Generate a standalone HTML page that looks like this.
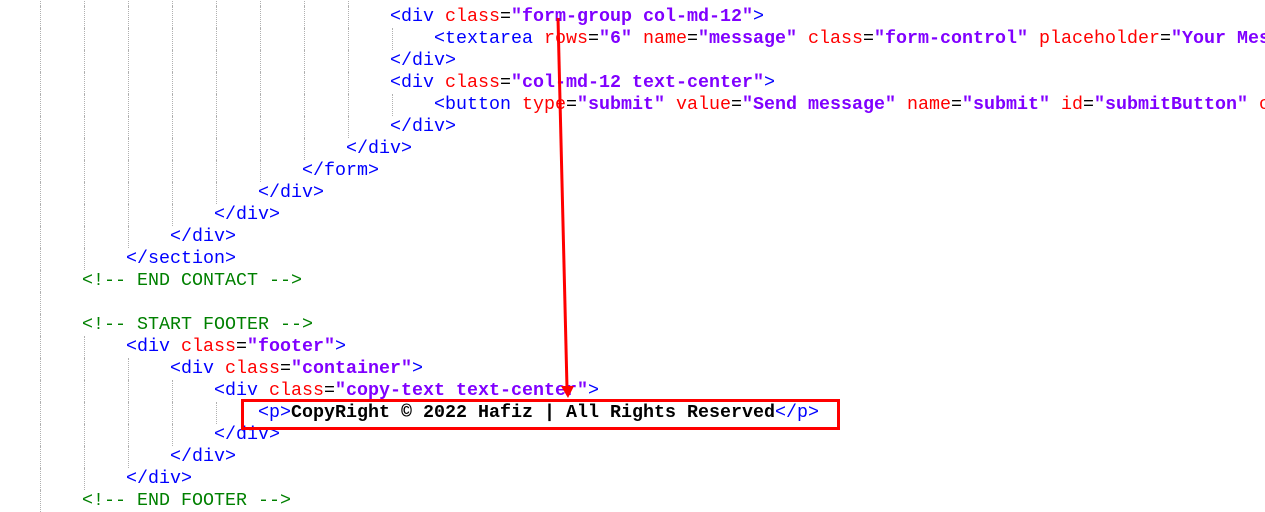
<!DOCTYPE html>
<html><head><meta charset="utf-8"><style>
body{margin:0;width:1265px;height:503px;overflow:hidden;background:#fff;position:relative;font-family:"Liberation Mono","Courier New",monospace;font-size:18.333px}
.l{position:absolute;height:22px;line-height:22px;white-space:pre}
.t{color:#0000ff}.a{color:#ff0000}.v{color:#8000ff;font-weight:bold}.c{color:#008000}.b{color:#000;font-weight:bold}
.g{position:absolute;width:0;border-left:1px dotted #b0b0b0}
</style></head><body>
<div id="guides"></div>
<div id="code"></div>
<div style="position:absolute;left:241px;top:399px;width:593px;height:25px;border:3px solid #f00"></div>
<svg style="position:absolute;left:0;top:0" width="1265" height="503">
<line x1="558" y1="18" x2="567" y2="388" stroke="#f00" stroke-width="3"/>
<polygon points="561,386 574,386 568,398" fill="#f00"/>
</svg>
<script>
(function(){
var L=[
[8,'<span class="t">&lt;/div&gt;</span>'],
[8,'<span class="t">&lt;div </span><span class="a">class</span>=<span class="v">"form-group col-md-12"</span><span class="t">&gt;</span>'],
[9,'<span class="t">&lt;textarea </span><span class="a">rows</span>=<span class="v">"6"</span> <span class="a">name</span>=<span class="v">"message"</span> <span class="a">class</span>=<span class="v">"form-control"</span> <span class="a">placeholder</span>=<span class="v">"Your Message"</span>'],
[8,'<span class="t">&lt;/div&gt;</span>'],
[8,'<span class="t">&lt;div </span><span class="a">class</span>=<span class="v">"col-md-12 text-center"</span><span class="t">&gt;</span>'],
[9,'<span class="t">&lt;button </span><span class="a">type</span>=<span class="v">"submit"</span> <span class="a">value</span>=<span class="v">"Send message"</span> <span class="a">name</span>=<span class="v">"submit"</span> <span class="a">id</span>=<span class="v">"submitButton"</span> <span class="a">class</span>'],
[8,'<span class="t">&lt;/div&gt;</span>'],
[7,'<span class="t">&lt;/div&gt;</span>'],
[6,'<span class="t">&lt;/form&gt;</span>'],
[5,'<span class="t">&lt;/div&gt;</span>'],
[4,'<span class="t">&lt;/div&gt;</span>'],
[3,'<span class="t">&lt;/div&gt;</span>'],
[2,'<span class="t">&lt;/section&gt;</span>'],
[1,'<span class="c">&lt;!-- END CONTACT --&gt;</span>'],
[1,''],
[1,'<span class="c">&lt;!-- START FOOTER --&gt;</span>'],
[2,'<span class="t">&lt;div </span><span class="a">class</span>=<span class="v">"footer"</span><span class="t">&gt;</span>'],
[3,'<span class="t">&lt;div </span><span class="a">class</span>=<span class="v">"container"</span><span class="t">&gt;</span>'],
[4,'<span class="t">&lt;div </span><span class="a">class</span>=<span class="v">"copy-text text-center"</span><span class="t">&gt;</span>'],
[5,'<span class="t">&lt;p&gt;</span><span class="b">CopyRight © 2022 Hafiz | All Rights Reserved</span><span class="t">&lt;/p&gt;</span>'],
[4,'<span class="t">&lt;/div&gt;</span>'],
[3,'<span class="t">&lt;/div&gt;</span>'],
[2,'<span class="t">&lt;/div&gt;</span>'],
[1,'<span class="c">&lt;!-- END FOOTER --&gt;</span>']
];
var h='',g='';
for(var i=0;i<L.length;i++){var n=L[i][0],y=-16+22*i;
h+='<div class="l" style="top:'+y+'px;left:'+(38+44*n)+'px">'+L[i][1]+'</div>';
for(var k=0;k<n;k++)g+='<div class="g" style="left:'+(40+44*k)+'px;top:'+y+'px;height:22px"></div>';}
document.getElementById('code').innerHTML=h;document.getElementById('guides').innerHTML=g;
})();
</script>
</body></html>
